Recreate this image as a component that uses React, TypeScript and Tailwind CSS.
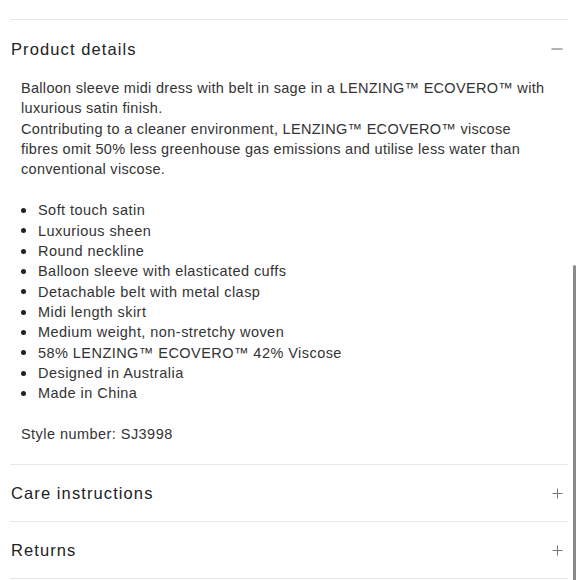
const bullets = [
  'Soft touch satin',
  'Luxurious sheen',
  'Round neckline',
  'Balloon sleeve with elasticated cuffs',
  'Detachable belt with metal clasp',
  'Midi length skirt',
  'Medium weight, non-stretchy woven',
  '58% LENZING™ ECOVERO™ 42% Viscose',
  'Designed in Australia',
  'Made in China',
];

function Plus() {
  return (
    <svg width="11" height="11" viewBox="0 0 11 11" className="text-[#777]">
      <path d="M5.5 0.5v10M0.5 5.5h10" stroke="currentColor" strokeWidth="1" fill="none" />
    </svg>
  );
}

function Minus() {
  return (
    <svg width="12" height="12" viewBox="0 0 12 12" className="text-[#666]">
      <path d="M0.5 6h11" stroke="currentColor" strokeWidth="1" fill="none" />
    </svg>
  );
}

function Row({ title, children }: { title: string; children: React.ReactNode }) {
  return (
    <div className="flex h-[57px] items-center justify-between border-t border-[#e6e6e6] pl-px pr-[5px]">
      <span className="text-[16.5px] tracking-[1.1px] text-[#222]">{title}</span>
      {children}
    </div>
  );
}

export default function App() {
  return (
    <div
      className="relative h-[580px] w-[580px] overflow-hidden bg-white"
      style={{ fontFamily: '"Liberation Sans", Arial, sans-serif' }}
    >
      <div className="ml-[10px] mr-[12px] pt-[19px]">
        <div className="border-t border-[#e6e6e6]">
          <div className="flex h-[58px] items-center justify-between pl-px pr-[5px]">
            <span className="text-[16.5px] tracking-[1.1px] text-[#222]">Product details</span>
            <Minus />
          </div>
          <div className="pb-[20px] pl-[11px] text-[14.5px] leading-[20.3px] tracking-[0.3px] text-[#333]">
            <p className="whitespace-nowrap">
              Balloon sleeve midi dress with belt in sage in a LENZING™ ECOVERO™ with
              <br />
              luxurious satin finish.
              <br />
              Contributing to a cleaner environment, LENZING™ ECOVERO™ viscose
              <br />
              fibres omit 50% less greenhouse gas emissions and utilise less water than
              <br />
              conventional viscose.
            </p>
            <ul className="mt-[21px]">
              {bullets.map((b) => (
                <li key={b} className="flex items-center whitespace-nowrap tracking-[0.45px]">
                  <span className="ml-0 mr-[12px] h-[5px] w-[5px] rounded-full bg-[#222]" />
                  {b}
                </li>
              ))}
            </ul>
            <p className="mt-[20.5px] tracking-[0.45px]">Style number: SJ3998</p>
          </div>
        </div>
        <Row title="Care instructions">
          <Plus />
        </Row>
        <Row title="Returns">
          <Plus />
        </Row>
        <div className="border-t border-[#e6e6e6]" />
      </div>
      <div className="absolute right-[4px] top-[265px] h-[320px] w-[3px] rounded-full bg-[#8a8a8a]" />
    </div>
  );
}
